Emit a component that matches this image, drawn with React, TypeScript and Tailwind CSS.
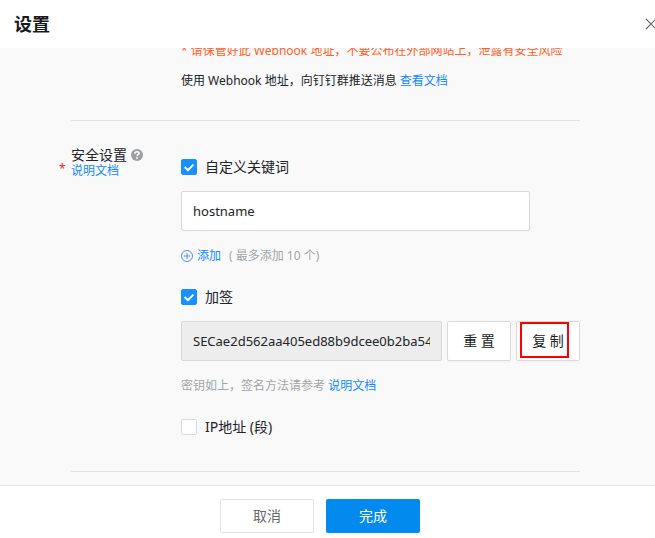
import type { ReactNode } from 'react';

type CheckRowProps = { id: string; label: string; checked?: boolean };

function CheckRow({ id, label, checked = false }: CheckRowProps) {
  return (
    <div className="flex h-6 items-center gap-2">
      <span className="grid size-4 shrink-0 place-items-center">
        <input
          id={id}
          type="checkbox"
          defaultChecked={checked}
          className="peer col-start-1 row-start-1 size-4 appearance-none rounded-xs border border-[#d9d9d9] bg-white checked:border-[#1890ff] checked:bg-[#1890ff]"
        />
        <svg
          viewBox="0 0 16 16"
          className="pointer-events-none col-start-1 row-start-1 hidden size-4 peer-checked:block"
          fill="none"
          stroke="#fff"
          strokeWidth="2"
        >
          <path d="M3.6 8 7 11.2 12.4 5.6" />
        </svg>
      </span>
      <label htmlFor={id} className="text-sm leading-6">
        {label}
      </label>
    </div>
  );
}

function Link({ children }: { children: ReactNode }) {
  return (
    <a href="#doc" className="text-[#1089ff]">
      {children}
    </a>
  );
}

function FieldButton({ children }: { children: ReactNode }) {
  return (
    <button
      type="button"
      className="h-10 w-16 rounded-xs border border-[#d9d9d9] bg-white text-sm shadow-[0_2px_0_rgba(0,0,0,0.015)]"
    >
      {children}
    </button>
  );
}

export default function App() {
  return (
    <div className="flex h-screen flex-col overflow-hidden bg-white font-['Noto_Sans','Noto_Sans_CJK_SC',sans-serif] text-[#202327]">
      <header className="flex h-12 shrink-0 items-center justify-between pl-3.5">
        <h1 className="text-lg font-bold text-[#171a1d]">设置</h1>
        <button type="button" aria-label="关闭" className="-mr-0.5 shrink-0">
          <svg viewBox="0 0 12 12" className="size-3" fill="none" stroke="#6b6e70" strokeWidth="1.2">
            <path d="M1 1 11 11M11 1 1 11" />
          </svg>
        </button>
      </header>

      <main className="min-h-0 flex-1 overflow-hidden bg-[#f9f9f9] pr-[75px] pl-[71px]">
        <section className="-mt-[7px] border-b border-[#e3e3e3] pb-[29px] pl-[110px] text-xs leading-5">
          <p className="mb-2.5 whitespace-nowrap text-[#ff6026]">
            * 请保管好此 Webhook 地址，不要公布在外部网站上，泄露有安全风险
          </p>
          <p className="whitespace-nowrap">
            使用 Webhook 地址，向钉钉群推送消息 <Link>查看文档</Link>
          </p>
        </section>

        <section className="flex border-b border-[#e3e3e3] pt-[26px] pb-8">
          <div className="relative w-[110px] shrink-0 text-xs leading-4">
            <span className="absolute top-3 -left-3 text-xs leading-5 text-[#f5222d]">*</span>
            <div className="flex items-center gap-1 text-sm leading-4">
              安全设置
              <svg viewBox="0 0 12 12" className="size-3" fill="none">
                <circle cx="6" cy="6" r="6" fill="#9c9fa3" />
                <path
                  d="M3.9 4.7C3.9 3.4 4.8 2.7 6 2.7S8.1 3.4 8.1 4.5C8.1 5.7 6 5.7 6 7.3"
                  stroke="#fff"
                  strokeWidth="1.5"
                />
                <circle cx="6" cy="9" r="0.9" fill="#fff" />
              </svg>
            </div>
            <Link>说明文档</Link>
          </div>

          <div className="min-w-0 flex-1 pt-2">
            <CheckRow id="keyword" label="自定义关键词" checked />
            <div className="mt-3 pr-[50px]">
              <input
                type="text"
                aria-label="关键词"
                defaultValue="hostname"
                className="block h-10 w-full rounded-xs border border-[#d9d9d9] bg-white px-[11px] text-[13px]"
              />
            </div>
            <div className="mt-[15px] flex h-5 items-center text-xs leading-5">
              <button type="button" className="flex items-center gap-1 text-[#1089ff]">
                <svg viewBox="0 0 12 12" className="size-3" fill="none" stroke="#4a90ff">
                  <circle cx="6" cy="6" r="5.5" />
                  <path d="M6 3V9M3 6H9" />
                </svg>
                添加
              </button>
              <span className="ml-2 text-[#a2a5a8]">( 最多添加 10 个)</span>
            </div>

            <div className="mt-[19px]">
              <CheckRow id="sign" label="加签" checked />
            </div>
            <div className="mt-3 flex gap-[5px]">
              <input
                type="text"
                readOnly
                aria-label="密钥"
                defaultValue="SECae2d562aa405ed88b9dcee0b2ba54e"
                className="h-10 min-w-0 flex-1 rounded-xs border border-[#d9d9d9] bg-[#ededed] px-[11px] text-[13px]"
              />
              <FieldButton>重 置</FieldButton>
              <div className="relative">
                <FieldButton>复 制</FieldButton>
                <span className="pointer-events-none absolute top-px left-1 h-9 w-[49px] border-2 border-[#f00]" />
              </div>
            </div>
            <p className="mt-[15px] text-xs leading-5 text-[#a2a5a8]">
              密钥如上，签名方法请参考 <Link>说明文档</Link>
            </p>

            <div className="mt-[19px]">
              <CheckRow id="ip" label="IP地址 (段)" />
            </div>
          </div>
        </section>
      </main>

      <footer className="flex h-[53px] shrink-0 justify-center gap-3 border-t border-[#e3e3e3] pt-[13px] pr-[15px] text-sm">
        <button type="button" className="h-[34px] w-[94px] rounded-xs border border-[#e3e3e3] bg-white text-[#67696b]">
          取消
        </button>
        <button type="button" className="h-[34px] w-[94px] rounded-xs bg-[#038aef] text-white">
          完成
        </button>
      </footer>
    </div>
  );
}
